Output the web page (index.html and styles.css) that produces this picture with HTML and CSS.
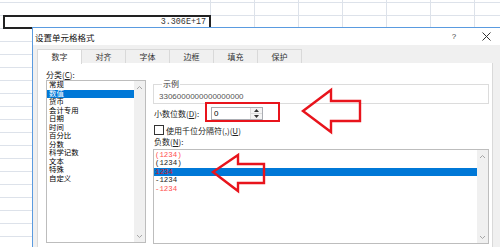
FILE: index.html
```html
<!DOCTYPE html>
<html lang="zh-CN">
  <head>
    <meta charset="UTF-8" />
    <title>设置单元格格式</title>
    <link rel="stylesheet" href="styles.css">
  </head>
  <body>
    <!-- Spreadsheet behind the dialog -->
    <div class="sheet">
      <div class="sheet-cols"></div>
      <div class="cell">3.306E+17</div>
    </div>

    <!-- Format cells dialog -->
    <div class="dialog">
      <div class="titlebar">
        <span class="title">设置单元格格式</span>
        <span class="title-btn help">?</span>
        <span class="title-btn close">
          <svg width="9" height="9" viewBox="0 0 9 9"><path d="M0.5 0.5L8.5 8.5M8.5 0.5L0.5 8.5" stroke="#333" stroke-width="1" fill="none"/></svg>
        </span>
      </div>
      <div class="dialog-body">
        <div class="tabs">
          <div class="tab active">数字</div>
          <div class="tab">对齐</div>
          <div class="tab">字体</div>
          <div class="tab">边框</div>
          <div class="tab">填充</div>
          <div class="tab">保护</div>
        </div>
        <div class="panel">
          <div class="col-left">
            <div class="label">分类(<u>C</u>):</div>
            <div class="listbox category-list">
              <ul class="items">
                <li>常规</li>
                <li class="selected">数值</li>
                <li>货币</li>
                <li>会计专用</li>
                <li>日期</li>
                <li>时间</li>
                <li>百分比</li>
                <li>分数</li>
                <li>科学记数</li>
                <li>文本</li>
                <li>特殊</li>
                <li>自定义</li>
              </ul>
              <div class="scrollbar">
                <svg width="7" height="5" viewBox="0 0 7 5"><path d="M1 4L3.5 1.5L6 4" stroke="#a6a6a6" fill="none"/></svg>
                <svg width="7" height="5" viewBox="0 0 7 5"><path d="M1 1L3.5 3.5L6 1" stroke="#a6a6a6" fill="none"/></svg>
              </div>
            </div>
          </div>

          <div class="col-right">
            <fieldset class="sample">
              <legend>示例</legend>
              <div class="sample-value">3306000000000000000</div>
            </fieldset>

            <div class="decimal-row">
              <span class="decimal-label">小数位数(<u>D</u>):</span>
              <div class="spin">
                <span class="spin-value">0</span>
                <div class="spin-buttons">
                  <span class="spin-btn">
                    <svg width="5" height="3" viewBox="0 0 5 3"><path d="M0 3L2.5 0L5 3Z" fill="#333"/></svg>
                  </span>
                  <span class="spin-btn">
                    <svg width="5" height="3" viewBox="0 0 5 3"><path d="M0 0L2.5 3L5 0Z" fill="#333"/></svg>
                  </span>
                </div>
              </div>
            </div>

            <div class="check-row">
              <span class="checkbox"></span>
              <span>使用千位分隔符(,)(<u>U</u>)</span>
            </div>

            <div class="label neg-label">负数(<u>N</u>):</div>
            <div class="listbox negative-list">
              <ul class="items mono">
                <li class="red">(1234)</li>
                <li>(1234)</li>
                <li class="selected red">1234</li>
                <li>-1234</li>
                <li class="red">-1234</li>
              </ul>
              <div class="scrollbar">
                <svg width="7" height="5" viewBox="0 0 7 5"><path d="M1 4L3.5 1.5L6 4" stroke="#a6a6a6" fill="none"/></svg>
                <svg width="7" height="5" viewBox="0 0 7 5"><path d="M1 1L3.5 3.5L6 1" stroke="#a6a6a6" fill="none"/></svg>
              </div>
            </div>
          </div>
        </div>
      </div>
    </div>

    <!-- Red annotations drawn over the screenshot -->
    <div class="mark-box"></div>
    <svg class="marks" width="500" height="247" viewBox="0 0 500 247">
      <polygon points="303,111 331,90 331,101 360,101 360,121 331,121 331,132" />
      <polygon points="213,172 238,155 238,164 264,164 264,183 238,183 238,191" />
    </svg>
  </body>
</html>
```

FILE: styles.css
```css
/* General styles */
html,
body {
  margin: 0;
  padding: 0;
}
body {
  position: relative;
  width: 500px;
  height: 247px;
  overflow: hidden;
  background-color: #ffffff;
  font-family: "Noto Sans CJK SC", "Noto Sans", sans-serif;
  font-size: 8px;
  color: #000;
}
u {
  text-decoration: underline;
}

/* Spreadsheet */
.sheet {
  position: absolute;
  inset: 0;
  background-image: repeating-linear-gradient(
    to bottom,
    #dde2ea 0,
    #dde2ea 1px,
    transparent 1px,
    transparent 13px
  );
  background-position: 0 2px;
}
.sheet-cols {
  position: absolute;
  left: 210px;
  top: 0;
  right: 0;
  bottom: 0;
  background-image: repeating-linear-gradient(
    to right,
    #dde2ea 0,
    #dde2ea 1px,
    transparent 1px,
    transparent 44px
  );
}
.cell {
  position: absolute;
  left: 3px;
  top: 15px;
  width: 208px;
  height: 14px;
  box-sizing: border-box;
  border: 2px solid #222;
  background: #fff;
  font-family: "Liberation Mono", monospace;
  font-size: 8.4px;
  line-height: 10px;
  text-align: right;
  padding-right: 3px;
  color: #333;
}

/* Dialog */
.dialog {
  position: absolute;
  left: 32px;
  top: 27px;
  width: 470px;
  height: 219px;
  border: 1px solid #5a9be0;
  border-bottom: none;
  background: #f0f0f0;
  overflow: hidden;
}
.titlebar {
  display: flex;
  align-items: center;
  height: 17px;
  background: #fff;
  padding: 0 1px 0 2px;
}
.title {
  flex: 1;
  font-size: 8.5px;
  color: #111;
}
.title-btn {
  width: 32px;
  text-align: center;
  display: flex;
  justify-content: center;
  align-items: center;
  color: #444;
}
.help {
  font-family: "Liberation Sans", sans-serif;
  font-size: 8px;
}
.dialog-body {
  padding: 4px 0 0 4px;
}

/* Tabs */
.tabs {
  display: flex;
  height: 14px;
}
.tab {
  width: 45px;
  box-sizing: border-box;
  border: 1px solid #d9d9d9;
  border-bottom: none;
  margin-right: -1px;
  text-align: center;
  line-height: 13px;
  color: #333;
  background: #f0f0f0;
}
.tab.active {
  background: #fff;
  position: relative;
  z-index: 1;
  height: 15px;
}

/* Tab panel */
.panel {
  width: 456px;
  height: 184px;
  box-sizing: border-box;
  border: 1px solid #d9d9d9;
  border-top: none;
  border-bottom: none;
  background: #fff;
  display: grid;
  grid-template-columns: 100px 336px;
  column-gap: 7px;
  padding: 7px 0 0 8px;
}
.label {
  line-height: 10px;
  color: #222;
}

/* List boxes */
.listbox {
  display: flex;
  box-sizing: border-box;
  border: 1px solid #bdbdbd;
  background: #fff;
}
.items {
  list-style: none;
  margin: 0;
  padding: 0;
  flex: 1;
}
.scrollbar {
  width: 11px;
  background: #f0f0f0;
  display: flex;
  flex-direction: column;
  justify-content: space-between;
  align-items: center;
  padding: 4px 0 3px;
}
.category-list {
  height: 163px;
}
.category-list .items li {
  font-family: "Liberation Sans", "Noto Sans CJK SC", sans-serif;
  font-size: 7.4px;
  line-height: 8.5px;
  height: 8.5px;
  padding-left: 2px;
  white-space: nowrap;
}
.items li.selected {
  background: #0078d7;
  color: #fff;
}
.negative-list {
  margin-top: 2px;
  height: 95px;
}
.mono {
  font-family: "Liberation Mono", monospace;
  font-size: 7.4px;
  padding-top: 1px;
}
.negative-list .items li {
  line-height: 8.4px;
  height: 8.4px;
  padding-left: 1px;
  color: #222;
}
.negative-list .items li.red {
  color: #ff4f4f;
}
.negative-list .items li.selected.red {
  color: #d0141a;
}

/* Right column */
.sample {
  margin: 9px 0 0;
  padding: 3px 5px 1px;
  border: 1px solid #dcdcdc;
  min-width: 0;
}
.sample legend {
  padding: 0 1px;
  margin-left: 3px;
  line-height: 10px;
  color: #333;
}
.sample-value {
  line-height: 10px;
  color: #555;
  font-family: "Liberation Sans", sans-serif;
  font-size: 8px;
}
.decimal-row {
  display: flex;
  align-items: center;
  margin-top: 3px;
  height: 13px;
}
.decimal-label {
  width: 58px;
  padding-left: 1px;
  box-sizing: border-box;
  color: #222;
}
.spin {
  display: flex;
  width: 52px;
  height: 13px;
  box-sizing: border-box;
  border: 1px solid #abadb3;
}
.spin-value {
  flex: 1;
  padding-left: 2px;
  line-height: 11px;
  font-family: "Liberation Sans", sans-serif;
  font-size: 8px;
}
.spin-buttons {
  width: 11px;
  display: flex;
  flex-direction: column;
  border-left: 1px solid #dcdcdc;
}
.spin-btn {
  flex: 1;
  display: flex;
  justify-content: center;
  align-items: center;
  background: #f4f4f4;
}
.spin-btn + .spin-btn {
  border-top: 1px solid #dcdcdc;
}
.check-row {
  display: flex;
  align-items: center;
  gap: 2px;
  margin-top: 5px;
  height: 10px;
  padding-left: 1px;
  color: #222;
}
.checkbox {
  width: 8px;
  height: 8px;
  border: 1px solid #333;
  background: #fff;
}
.neg-label {
  margin-top: 2px;
  padding-left: 1px;
}

/* Annotations */
.mark-box {
  position: absolute;
  left: 205px;
  top: 102px;
  width: 71px;
  height: 16px;
  border: 2px solid #e8141c;
}
.marks {
  position: absolute;
  left: 0;
  top: 0;
  pointer-events: none;
}
.marks polygon {
  fill: none;
  stroke: #e8141c;
  stroke-width: 2.4;
  stroke-linejoin: miter;
}
```
